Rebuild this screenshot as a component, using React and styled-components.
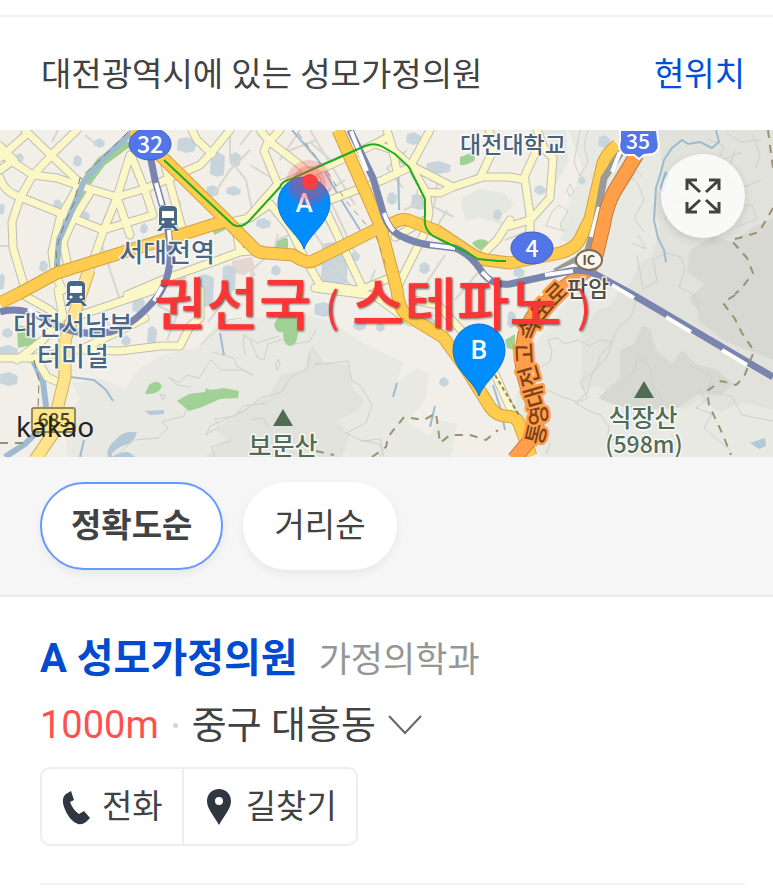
import React, { useState } from 'react';
import styled, { createGlobalStyle } from 'styled-components';

const GlobalStyle = createGlobalStyle`
  * {
    box-sizing: border-box;
  }

  body {
    margin: 0;
    background-color: #fff;
    color: #424242;
    font-family: Roboto, 'Noto Sans CJK KR', sans-serif;
  }

  button {
    margin: 0;
    font-family: inherit;
    color: inherit;
    cursor: pointer;
  }
`;

const Page = styled.main`
  padding-top: 15px;
  overflow: hidden;
`;

const Header = styled.header`
  display: flex;
  align-items: center;
  justify-content: space-between;
  height: 115px;
  padding: 2px 28px 0 41px;
  border-top: 2px solid #f1f1f1;
`;

const Heading = styled.h1`
  margin: 0;
  font-size: 33px;
  font-weight: 400;
  line-height: 48px;
`;

const LocationLink = styled.a`
  color: #0050d7;
  font-size: 33px;
  line-height: 48px;
  text-decoration: none;
`;

const MapArea = styled.section`
  position: relative;
  height: 327px;
  overflow: hidden;
`;

const MapSvg = styled.svg`
  display: block;
  width: 100%;
  height: 100%;
  font-family: 'Noto Sans CJK KR', sans-serif;
`;

const ExpandButton = styled.button`
  position: absolute;
  top: 24px;
  right: 28px;
  display: flex;
  align-items: center;
  justify-content: center;
  width: 84px;
  height: 84px;
  padding: 0;
  border: 0;
  border-radius: 50%;
  background-color: rgba(255, 255, 255, 0.8);
  box-shadow: 0 3px 8px rgba(0, 0, 0, 0.12);
`;

const FilterBar = styled.div`
  display: flex;
  gap: 20px;
  padding: 25px 40px;
  border-bottom: 2px solid #ececec;
  background-color: #f6f6f6;
`;

const FilterButton = styled.button`
  height: 88px;
  padding: 0 29px;
  border: 2px solid ${(props) => (props.$active ? '#6699ff' : '#fff')};
  border-radius: 44px;
  background-color: #fff;
  box-shadow: 0 4px 10px rgba(0, 0, 0, 0.06);
  font-size: 33px;
  font-weight: ${(props) => (props.$active ? 700 : 400)};
  line-height: 48px;
`;

const Place = styled.article`
  margin: 0 28px 0 40px;
  padding: 30px 0 37px;
  border-bottom: 2px solid #f1f1f1;
`;

const TitleRow = styled.div`
  display: flex;
  align-items: baseline;
  gap: 21px;
  line-height: 64px;
`;

const PlaceName = styled.h2`
  margin: 0;
  color: #004bd0;
  font-size: 40px;
  font-weight: 700;
`;

const Category = styled.span`
  color: #959595;
  font-size: 35px;
`;

const AddressRow = styled.div`
  display: flex;
  align-items: center;
  height: 64px;
  font-size: 38px;
  line-height: 64px;
`;

const Distance = styled.span`
  color: #ff5050;
`;

const Dot = styled.span`
  width: 5px;
  height: 5px;
  margin: 0 14px;
  border-radius: 50%;
  background-color: #d5d5d5;
`;

const AddressToggle = styled.button`
  display: flex;
  align-items: center;
  gap: 12px;
  padding: 0;
  border: 0;
  background: none;
  font-size: 38px;
  line-height: 64px;
`;

const Actions = styled.div`
  display: inline-flex;
  height: 79px;
  margin-top: 10px;
  border: 2px solid #eee;
  border-radius: 10px;
  vertical-align: top;
`;

const ActionButton = styled.button`
  display: flex;
  align-items: center;
  gap: 12px;
  padding: 0 19px 0 20px;
  border: 0;
  background: none;
  font-size: 33px;
  line-height: 48px;

  & + & {
    border-left: 2px solid #eee;
  }
`;

const darkHills = [
  'M583 330l15-20 12-4 10-18 12-6 6-18 14-8 8-28-8-20 12-30-6-48h115v280l-30-8-22 10-22-12-14 10-30-18-34 6-24-12-16 4z',
  'M312 347l8 14 28 4 4 22 12 14-6 10-22 10 14 14-8 22H205l22-20-12-7 32-24 22-10 12-22 24-4 2-14z',
];

const darkerHills = [
  'M598 398l22-20 0-28 14-6 8-18 8 2 6 22 16 14 10-14 14 14 20 6 18 14-14 12-22-2-20 14-40 2-26-6z',
  'M690 250l24-14 18 6 20-14 21-10v120l-30-4-18-14-24-4-12-18 16-14-18-12z',
  'M700 290l22 12 16 20 24 4 11 12v22l-50-20-25-20z',
];

const contours = [
  'M548 340l10-2 6 6 14-4 12 6 10-6 12 2-12 14-4 14-16 12 8 16-10 4-18-6-12-6-8 10 6 20-8 8 12 16-4 10',
  'M536 370l14-8 2-12-4-10',
  'M575 403l14 8 12 4 8 12-2 14 18-4 20 14',
  'M575 403l12-10 6-22 14-14 10-28 14-12 8-24',
  'M616 390l18-18 4-18 12 14 4 20 10 14',
  'M637 255l6 34 14-8-4-22 14-6 14 4 4 12-6 18 16 8 4 16',
  'M690 365l22 12-4 12 24 8 10 18 31 6M700 390l6 10-10 8 16 6-8 14 26 22',
  'M580 130l-6 32 6 14 8-14-4-16 4-16M570 184l4 8-4 5-3-6zM559 205l9 6-8 14 4 6-18-5 6-14z',
  'M630 176l8 8 6 16-10 18 10 14M627 185l10-14 6 6M638 235l8 14-14-6',
  'M665 220l6-18 16-3 14-12 14 2 4 12 13-9 2 14 18-1 5 14-20 8',
  'M706 138l18 8-6 16 24-10M752 134l8 20-4 14M735 150l-10 30 16 8 20-8M725 132l16 10 20-2',
  'M312 347l10 14-8 4 34-4 4 20 8 4 12 20-6 18-20 10 16 8 18-2 3 12-8 14',
  'M250 340l8 18 6 2 4-16 18-6M290 345l20-4 6-12M310 350l-2 18-18 10-8 14-22 6-14 12-36 16-4 10',
  'M169 377l10 6 8-8 12 3 12-18 10 10 22 0 10 5-16-9-3-8-22-6',
  'M169 377l8 8 14 2M163 400l3-4-6-2zM120 452l14-12 24-2 10-10-6-6 22-6 4-12 14-4',
  'M205 435l14-8-4-8 20-3 8-10 24-3M215 457l-4-10 20-6M250 420l14-2 4 10',
  'M245 355l-2-17 3-4M276 365l2-6 2 4-3 8z',
  'M200 345l28-25 14-2M243 335l14 8 22-7M360 440l20 4 4 13',
];

const waters = [
  'M115 440q8-10 22-8-3 12-15 14-12 6-10 11 6-5 16-5 5 2 7 5h-27q-3-8 7-17z',
  'M145 411l19-1 0 4-14 1zM750 443l15-5 1 8-7 3z',
];

const buildings = [
  [178, 137, 18, 13], [211, 152, 14, 22], [231, 152, 10, 12], [207, 185, 12, 9], [227, 186, 14, 7],
  [95, 138, 10, 7], [74, 155, 8, 9], [16, 153, 8, 7], [54, 199, 8, 9], [0, 203, 5, 9],
  [82, 211, 8, 7], [175, 199, 6, 8], [141, 223, 7, 8], [94, 243, 6, 7], [40, 260, 8, 9],
  [0, 273, 5, 14], [175, 270, 12, 8], [198, 274, 16, 30], [223, 265, 13, 24], [257, 218, 14, 8],
  [272, 265, 9, 8], [322, 242, 26, 40], [352, 251, 8, 8], [388, 192, 9, 10], [412, 193, 16, 14],
  [407, 132, 14, 10], [427, 161, 24, 10], [494, 209, 8, 8], [420, 262, 10, 9], [535, 185, 11, 7],
  [579, 176, 7, 6], [599, 135, 11, 10], [514, 267, 11, 8], [0, 372, 18, 11], [3, 328, 10, 7],
  [0, 345, 18, 10], [133, 297, 12, 13], [148, 326, 9, 15], [122, 335, 9, 8], [315, 302, 18, 12],
  [354, 319, 12, 9], [377, 322, 8, 7], [440, 377, 9, 7], [424, 317, 12, 10], [508, 311, 8, 14],
];

const lanes = [
  'M230 130v30l16 20 6 30M240 145l12-15M250 150l-20 20-16 24M100 240l20 60M0 246h10M58 130l-6 12M85 135l12 10',
  'M250 165l30 18M262 130l24 22 30-12M300 130l-20 30M310 142l28 24M345 180l-35 22-28 12M310 130l45 75M330 200l26 55',
  'M285 190l65 95M300 185l42 60M318 280l36-20M322 220l-44 20M252 270l22-20 4-16M330 205l-34 12',
  'M407 150l-20 18 16 20M438 177l-4 30 20 10M404 210l26-12M447 210l-12 20M425 285l20-30M480 270l-25 30',
  'M505 240l20-8 12-18M340 290l-14 20M375 270l-10 25M157 305l20 10-10 25M233 290l-25 32M96 305l20 30',
];

const minorRoads = [
  'M0 152l13 10 20 13 24 3 20 7 40 12 30-9 30-13 23-10 12-13 18-22',
  'M0 158l28-25 52 50M28 133l-3-3M50 156l27-26M52 155l-19 20-13 23-8 24 1 26 14 47M0 146l14 14-14 10',
  'M0 178q4 14 20 19l40 16 43 17 50-15-8-25-14-35',
  'M130 155l-13 42-14 35-15 43M117 197l13 38M80 183l-20 35-8 34 3 23 8 15M92 190l-20 32-9 20 4 20',
  'M163 158l20 74M192 130l5 10 15 14M225 223l25-5 20-14',
  'M127 295l40-17 46-16 27-10 22-2M237 235l3 17',
  'M260 130l10 12 30 23 17 15M280 130l-13 14-3 7 14 34M248 218l28-32 54-21 45-21 13-7',
  'M387 130l6 20 4 22M270 204l20 24 13 27 17 30 43 6M327 213l36 76M330 200l53-20 27-13 20-37',
  'M375 144l18 6 17 15 16 27 3 20-3 18-9 18-20 40M395 237l32-18M410 165l43 22 30-10 27 0M421 192l19 1 13-6M480 178l15-32-6-16',
  'M363 291l-43-6M363 289l34-14M485 252l12-12 13-20M510 177l15 3 5 35v17M540 142l-17 38M537 130l8 20 8 8-3 40-20 22-20 6',
  'M0 358h33l42-8M83 350l37 1 40-5h20l10-20 10-8v-28M20 293l30 17 10 10-17 20-26 20M58 290l5 27M75 317l85-29',
  'M80 350l35-17 30-15M37 360l10 17 13 6M315 288l60 8 35 26M413 300l25 5 22 24 35 45 20 45',
];

const mainRoads = [
  'M0 303l20-10 37-20 73-23 50-15 45-14',
  'M133 130l32 30 61 60 30 30q4 3 10 3l27 2q6 4 14 7 6 0 12-4l54-27 27-11q4-1 8 0l29 11 36 24q7 4 13 5l24 3 50-10q15-4 20-14l10-20 13-56q4-10 14-18',
  'M338 130l42 95 17 65q2 22 13 27l33 20 24 33 23 37q6 8 14 9 14 0 16 10l11 30',
];

const highway = 'M637 154L614 192Q607 205 604 222L597 252Q594 266 582 274L560 290L537 311Q525 325 523 345Q520 360 525 380L536 413Q540 430 530 440L514 459';

const railways = [
  'M150 155l5 25 10 35q6 25 5 45-2 28-20 45-20 22-40 27-35 6-65-13-25-13-45-7',
  'M350 130l23 48 10 34q6 20 20 25 12 6 27 8l25 3q14 5 25 21 10 17 30 15l60-13q14-2 23 2l37 20 143 84',
];

const trails = [
  'M372 457l14-10 2-10 16-20 20 3 12-7 4 30 10-8 20 0 16 5 12-10',
  'M768 130l2 16 3 22M773 208l-14 24-20 6-8 2 16 18 6 15-12 16-6 5',
  'M735 295l-12 8 12 16 7 14 12 18-10 26-8 8-15-4-14 10 2 14 14 30 8 20M316 451l18 4M0 443h25',
];

const riverGreens = 'M128 142l-27 20-14 19-17 43';

function Shield({ x, y, label }) {
  return (
    <g>
      <ellipse cx={x} cy={y} rx="21" ry="16" fill="#5275e8" stroke="#3f5fc4" strokeWidth="1" />
      <text x={x} y={y + 9} fill="#fff" fontSize="23" fontWeight="500" textAnchor="middle">{label}</text>
    </g>
  );
}

function StationIcon({ x, y }) {
  return (
    <g transform={`translate(${x} ${y})`} fill="#486784" stroke="#fff" strokeWidth="1" paintOrder="stroke">
      <path d="M-9-8q0-4 5-4h8q5 0 5 4V7h-3l5 6h-4l-2-3H-5l-2 3h-4l5-6h-3z" />
      <path d="M-6-7H6v7H-6z" fill="#fff" stroke="none" />
      <circle cx="-5" cy="4" r="1.6" fill="#fff" stroke="none" />
      <circle cx="5" cy="4" r="1.6" fill="#fff" stroke="none" />
    </g>
  );
}

function Pin({ x, y, label }) {
  return (
    <g transform={`translate(${x} ${y})`}>
      <path d="M0 46C-5 31-26 20-26 0a26 26 0 0 1 52 0C26 20 5 31 0 46z" fill="#008eff" stroke="#0875d2" strokeWidth="1" />
      <text y="9" fill="#fff" fontFamily="Roboto" fontSize="26" fontWeight="500" textAnchor="middle">{label}</text>
    </g>
  );
}

const MapLabel = styled.text`
  fill: ${(props) => props.$color};
  stroke: #fff;
  stroke-opacity: 0.8;
  stroke-width: 3px;
  stroke-linejoin: round;
  paint-order: stroke;
  font-size: ${(props) => props.$size || 23}px;
  font-weight: 500;
  text-anchor: middle;
`;

const NameLabel = styled.text`
  fill: #ff3535;
  font-size: 57px;
  font-weight: 500;
  filter: drop-shadow(1px 1px 1px rgba(60, 20, 20, 0.7));
`;

function MapDrawing() {
  return (
    <MapSvg viewBox="0 130 773 327" preserveAspectRatio="xMidYMid slice" role="img" aria-label="지도">
      <rect y="130" width="773" height="327" fill="#f2efe9" />
      <path d="M568 130h205v327H540l-25-52 8-45 60-80-3-30-20-22 22-60zM68 457l-4-40 16-18-8-16 30-4 24 10 10-18 26-16 36-8 20-25 40-4 40-6 32 10 35 22 38 18-6 20 20-14 12 6-4 26-18 22 22 14 10-16 18 4-6 33z" fill="#e8e9e3" />
      <path d="M462 197l18-8 24 4 10 12-14 12 6 10-26-10-14 4-4-12zM560 240l12-26 8 4 4 20-12 6zM540 130l10 10-8 12 12 10 2 22 12-22-2-32z" fill="#e5e7e1" />
      {darkHills.map((d) => <path key={d} d={d} fill="#e1e2dc" />)}
      {darkerHills.map((d) => <path key={d} d={d} fill="#d6d8d1" />)}
      {contours.map((d) => <path key={d} d={d} fill="none" stroke="#cfd0ca" strokeWidth="1" />)}
      <path d="M232 261l20-4 3 10-10 8-13-2zM250 263l6 12-6 4z" fill="#e5d6d2" />

      {buildings.map(([x, y, w, h]) => (
        <path key={`${x}-${y}`} d={`M${x} ${y + 2}l${w / 2}-2 ${w / 2} 4-1 ${h - 3}-${w / 2} 2-${w / 2}-3z`} fill="#c8d5dd" />
      ))}
      {waters.map((d) => <path key={d} d={d} fill="#b4c9d8" />)}
      <path d="M177 401l12-7 16-2 1-4 4 2 14-2 15 3-1 7-18 1-18 8-13 4zM145 394l4-9q8-7 13 1-3 9-17 8zM274 325q6-16 22-10l3 15-3 12q-7 8-12-1l-1-9q-6 2-9-7zM276 242q6-8 12-3l0 9-12 1zM472 243q10-8 19 1l-4 8q-9-1-15-9zM460 157l14-5 1 8q-8 6-15 5zM17 325l18 3 2 20-10-2-9 2zM505 340l10-6v16l-8-2zM213 230l12-4v4l-11 5z" fill="#a1d194" />

      {lanes.map((d) => <path key={d} d={d} fill="none" stroke="#d8d6d1" strokeWidth="2" />)}
      <path d={riverGreens} fill="none" stroke="#9fd090" strokeWidth="10" />
      <g fill="none" stroke="#9dbbd0">
        <path d="M33 360l10 22 3 24-7 24-14 14-20 13" strokeWidth="6" />
        <path d="M70 377l24 3 12 10 7 11M220 333l4 22M84 440l-4 17M393 397l4-14M430 427l5-21M292 130l26 30 22 38 20 32M398 162l1 48M493 385l8 25 4 20" strokeWidth="2" />
        <path d="M716 130l3 12-7 6-12-6-12 2-6-4-10 8-8 12-3 12-5 16-2 32 4 18 6 12 2 12" strokeWidth="2" />
        <path d="M665 172l4 2-6 18-3-4z" fill="#9dbbd0" />
      </g>

      <g fill="none" strokeLinejoin="round" strokeLinecap="round">
        {minorRoads.map((d) => <path key={d} d={d} stroke="#bfbdb4" strokeWidth="9" />)}
        {minorRoads.map((d) => <path key={d} d={d} stroke="#fcf7c6" strokeWidth="7" />)}
      </g>
      <path d="M132 132l-28 26-20 23-14 34-11 25-2 25 3 12" fill="none" stroke="#9dbbd0" strokeWidth="6" />
      <path d="M128 132l-26 26-22 20-6 25-10 22-8 25 1 22M34 360l5 20-1 30" fill="none" stroke="#8b795b" strokeWidth="1" strokeDasharray="8 5" />
      <g fill="none" strokeLinejoin="round">
        <path d="M89 270l-12 36-12 34v37l-8 33-5 25-17 25" stroke="#d3b25b" strokeWidth="13" />
        <path d="M89 270l-12 36-12 34v37l-8 33-5 25-17 25" stroke="#ffe48d" strokeWidth="11" />
        {mainRoads.map((d) => <path key={d} d={d} stroke="#d5a13c" strokeWidth="13" />)}
        {mainRoads.map((d) => <path key={d} d={d} stroke="#ffcc50" strokeWidth="11" />)}
        <path d="M624 148l-20 30-8 44-9 32-32 18" stroke="#9a9b98" strokeWidth="7" />
        <path d="M620 152l-8 20M599 207l-8 30M575 265l-20 8" stroke="#fff" strokeWidth="4" />
        <path d={highway} stroke="#c9793b" strokeWidth="15" />
        <path d={highway} stroke="#ff9f49" strokeWidth="13" />
        {railways.map((d) => <path key={d} d={d} stroke="#7985ae" strokeWidth="7" />)}
        <path d="M156 183l6 22M169 230l1 14M162 287l-8 14M28 309l12 7M351 131l16 40M384 213q4 12 10 18M430 245l25 3M482 272l8 8M545 275l28-4M612 285l22 13M666 317l25 15M722 350l25 15" stroke="#fff" strokeWidth="4" />
        <path d="M495 375l24 40" stroke="#8e8358" strokeWidth="2" strokeDasharray="4 3" />
        {trails.map((d) => <path key={d} d={d} stroke="#9b9273" strokeWidth="2" strokeDasharray="8 7" />)}
        <path d="M298 133l30 40 18 28 22 26M376 236l10 30" stroke="#a1977c" strokeWidth="1" strokeDasharray="6 6" />
      </g>

      <ellipse cx="589" cy="260" rx="13" ry="10" fill="#faf6ec" stroke="#776f59" strokeWidth="2" />
      <text x="589" y="265" fill="#5f563d" fontSize="13" fontWeight="700" textAnchor="middle">IC</text>

      <path id="highway-label" d="M541 446Q550 422 544 398L536 370Q530 348 536 334Q541 320 568 294" fill="none" />
      <text fill="#80421c" stroke="#ff9f49" strokeWidth="5" strokeLinejoin="round" paintOrder="stroke" fontSize="23" fontWeight="500">
        <textPath href="#highway-label">통영대전고속도로</textPath>
      </text>

      <Shield x={150} y={144} label="32" />
      <Shield x={532} y={248} label="4" />
      <path d="M620 130h37l1 10q3 10-5 14l-9 1-5 4-5-4h-9q-8-4-5-14z" fill="#5275e8" stroke="#fff" strokeWidth="2" />
      <text x="638" y="149" fill="#fff" fontSize="21" fontWeight="500" textAnchor="middle">35</text>

      <StationIcon x={168} y={218} />
      <StationIcon x={76} y={293} />
      <MapLabel x="167" y="262" $size={26} $color="#486784">서대전역</MapLabel>
      <MapLabel x="73" y="335" $size={26} $color="#486784">대전서남부</MapLabel>
      <MapLabel x="73" y="366" $size={26} $color="#486784">터미널</MapLabel>
      <MapLabel x="513" y="153" $color="#48627a">대전대학교</MapLabel>
      <MapLabel x="588" y="297" $color="#554f41">판암</MapLabel>
      <MapLabel x="283" y="455" $size={25} $color="#526b54">보문산</MapLabel>
      <MapLabel x="643" y="427" $size={25} $color="#526b54">식장산</MapLabel>
      <MapLabel x="644" y="453" $color="#526b54">(598m)</MapLabel>
      <path d="M283 409l10 17h-20zM644 381l10 17h-20z" fill="#526b54" />

      <rect x="32" y="408" width="43" height="24" rx="2" fill="#fae78b" stroke="#9c8a55" strokeWidth="2" />
      <text x="54" y="427" fill="#4f4324" fontSize="19" fontWeight="500" textAnchor="middle">685</text>
      <text x="16" y="437" fill="#222" fontFamily="Noto Sans" fontSize="28">kakao</text>

      <Pin x={304} y={203} label="A" />
      <Pin x={479} y={350} label="B" />
      <path d="M164 160l66 62q9 9 19-1l31-34q2-6 11-8l74-33q10-4 18 1l12 7 14 13 16 32v17q-2 13 8 20l33 16 12 7 20 2h8" fill="none" stroke="#20ac20" strokeWidth="2" />
      <circle cx="309" cy="183" r="23" fill="#f43b4b" opacity="0.22" />
      <circle cx="309" cy="183" r="17" fill="#f43b4b" opacity="0.25" />
      <circle cx="310" cy="182" r="8" fill="#fa3d43" />

      <NameLabel x="154" y="325">
        권선국
        <tspan x="325" y="323" fontSize="42" fontWeight="400">(</tspan>
        <tspan x="352" y="325">스테파노</tspan>
        <tspan x="577" y="323" fontSize="42" fontWeight="400">)</tspan>
      </NameLabel>
    </MapSvg>
  );
}

function ExpandIcon() {
  return (
    <svg width="36" height="36" viewBox="0 0 36 36" fill="none" stroke="#424242" strokeWidth="3">
      <path d="M2 12V2h10M2 2l13 12M24 2h10v10M34 2L21 14M2 24v10h10M2 34l13-12M24 34h10V24M34 34L21 22" />
    </svg>
  );
}

function PhoneIcon() {
  return (
    <svg width="28" height="36" viewBox="0 0 28 36" fill="#303740">
      <path d="M9 2L4 5Q-1 9 2 18q5 14 14 17 4 1 8-2l4-4-6-7-5 3Q11 21 8 13l4-2z" />
    </svg>
  );
}

function PlaceIcon() {
  return (
    <svg width="30" height="36" viewBox="0 0 30 36" fill="#303740">
      <path fillRule="evenodd" d="M15 0C8 0 3 5 3 12c0 7 5 12 12 24 7-12 12-17 12-24C27 5 22 0 15 0zm0 8a4 4 0 1 1 0 8 4 4 0 0 1 0-8z" />
    </svg>
  );
}

const sorts = ['정확도순', '거리순'];

const App = () => {
  const [sort, setSort] = useState(sorts[0]);

  return (
    <>
      <GlobalStyle />
      <Page>
        <Header>
          <Heading>대전광역시에 있는 성모가정의원</Heading>
          <LocationLink href="#location">현위치</LocationLink>
        </Header>

        <MapArea>
          <MapDrawing />
          <ExpandButton type="button" aria-label="지도 크게 보기">
            <ExpandIcon />
          </ExpandButton>
        </MapArea>

        <FilterBar>
          {sorts.map((name) => (
            <FilterButton key={name} type="button" $active={sort === name} onClick={() => setSort(name)}>
              {name}
            </FilterButton>
          ))}
        </FilterBar>

        <Place>
          <TitleRow>
            <PlaceName>A 성모가정의원</PlaceName>
            <Category>가정의학과</Category>
          </TitleRow>
          <AddressRow>
            <Distance>1000m</Distance>
            <Dot />
            <AddressToggle type="button">
              중구 대흥동
              <svg width="34" height="20" viewBox="0 0 34 20" fill="none" stroke="#666" strokeWidth="2">
                <path d="M1 1l16 17L33 1" />
              </svg>
            </AddressToggle>
          </AddressRow>
          <Actions>
            <ActionButton type="button">
              <PhoneIcon />
              전화
            </ActionButton>
            <ActionButton type="button">
              <PlaceIcon />
              길찾기
            </ActionButton>
          </Actions>
        </Place>
      </Page>
    </>
  );
};

export default App;
